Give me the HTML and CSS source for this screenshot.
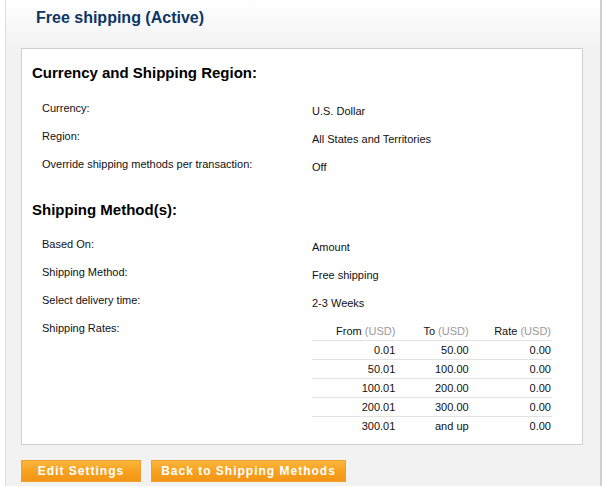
FILE: index.html
```html
<!DOCTYPE html>
<html>
<head>
<meta charset="utf-8">
<link rel="stylesheet" href="styles.css">
</head>
<body>
<div class="panel">
  <h1 class="title">Free shipping (Active)</h1>
  <div class="box">
    <h2 class="section-title">Currency and Shipping Region:</h2>
    <div class="rows">
      <div class="label">Currency:</div><div class="value">U.S. Dollar</div>
      <div class="label">Region:</div><div class="value">All States and Territories</div>
      <div class="label">Override shipping methods per transaction:</div><div class="value">Off</div>
    </div>
    <h2 class="section-title second">Shipping Method(s):</h2>
    <div class="rows">
      <div class="label">Based On:</div><div class="value">Amount</div>
      <div class="label">Shipping Method:</div><div class="value">Free shipping</div>
      <div class="label">Select delivery time:</div><div class="value">2-3 Weeks</div>
      <div class="label label-top">Shipping Rates:</div>
      <div class="value value-table">
        <table class="rates">
          <thead>
            <tr>
              <th class="c1">From <span class="unit">(USD)</span></th>
              <th class="c2">To <span class="unit">(USD)</span></th>
              <th class="c3">Rate <span class="unit">(USD)</span></th>
            </tr>
          </thead>
          <tbody>
            <tr><td>0.01</td><td>50.00</td><td>0.00</td></tr>
            <tr><td>50.01</td><td>100.00</td><td>0.00</td></tr>
            <tr><td>100.01</td><td>200.00</td><td>0.00</td></tr>
            <tr><td>200.01</td><td>300.00</td><td>0.00</td></tr>
            <tr><td>300.01</td><td>and up</td><td>0.00</td></tr>
          </tbody>
        </table>
      </div>
    </div>
  </div>
  <div class="actions">
    <button class="btn btn-edit">Edit Settings</button>
    <button class="btn btn-back">Back to Shipping Methods</button>
  </div>
</div>
</body>
</html>
```

FILE: styles.css
```css
html, body {
  margin: 0;
  padding: 0;
  background: #ffffff;
}
body {
  font-family: "Liberation Sans", Arial, sans-serif;
  color: #111;
  width: 610px;
  height: 486px;
  overflow: hidden;
}
.panel {
  margin-left: 5px;
  width: 594px;
  height: 486px;
  border-left: 1px solid #dcdcdc;
  border-right: 2px solid #cfcfcf;
  background: linear-gradient(#ffffff 0px, #f2f2f2 48px, #f2f2f2 100%);
  padding-top: 8px;
  box-sizing: content-box;
}
.title {
  margin: 0 0 20px 30px;
  font-size: 16px;
  line-height: 20px;
  font-weight: bold;
  color: #0d3566;
}
.box {
  margin-left: 15px;
  background: #fff;
  border: 1px solid #cfcfcf;
  padding: 14px 0 0 10px;
  box-sizing: border-box;
  width: 562px;
  height: 397px;
}
.section-title {
  margin: 0;
  font-size: 15px;
  line-height: 20px;
  font-weight: bold;
  color: #000;
}
.section-title.second {
  margin-top: 23px;
}
.rows {
  display: grid;
  grid-template-columns: 270px 1fr;
  margin: 10px 0 0 10px;
  font-size: 11px;
}
.section-title.second + .rows {
  margin-top: 9px;
}
.label, .value {
  line-height: 22px;
  height: 28px;
  box-sizing: border-box;
}
.label {
  padding-top: 4px;
}
.value {
  padding-top: 7px;
}
.label-top {
  padding-top: 4px;
  height: auto;
}
.value-table {
  padding-top: 0;
  height: auto;
}
.rates {
  border-collapse: collapse;
  margin-top: 9px;
  width: 240px;
  font-size: 11px;
  line-height: 18px;
}
.rates th {
  font-weight: normal;
  text-align: right;
  padding: 0 2px 0 0;
  height: 18px;
  border-bottom: 1px solid #e2e2e2;
}
.rates td {
  text-align: right;
  padding: 0 2px 0 0;
  height: 18px;
  border-bottom: 1px solid #e2e2e2;
}
.rates tbody tr:last-child td {
  border-bottom: none;
}
.rates .c1 { width: 83px; }
.rates .c2 { width: 71px; }
.rates .c3 { width: 80px; padding-right: 1px; }
.rates td:last-child { padding-right: 1px; }
.unit {
  color: #999;
  font-size: 11px;
}
.actions {
  display: flex;
  gap: 10px;
  margin: 15px 0 0 15px;
}
.btn {
  height: 22px;
  padding: 0;
  border: 1px solid #f0a030;
  background: linear-gradient(#fbb63a, #f6a01f 55%, #f39514);
  color: #fff;
  font-family: "Liberation Sans", Arial, sans-serif;
  font-weight: bold;
  font-size: 12px;
  letter-spacing: 1px;
  line-height: 20px;
}
.btn-edit { width: 120px; }
.btn-back { width: 195px; }
```
